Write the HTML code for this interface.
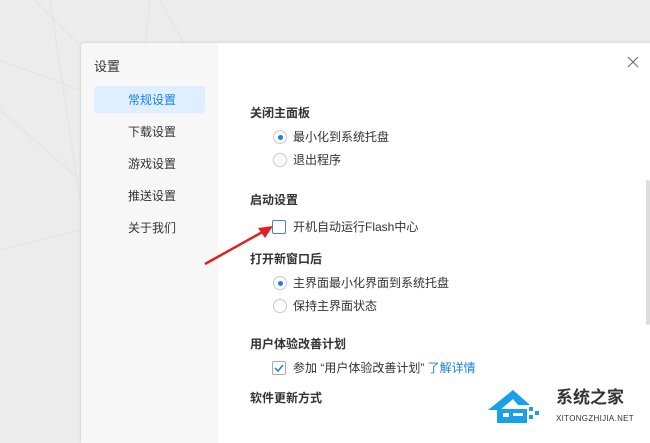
<!DOCTYPE html>
<html><head><meta charset="utf-8"><style>
*{margin:0;padding:0;box-sizing:border-box}
body{width:650px;height:436px;overflow:hidden;background:#ececec;font-family:"Liberation Sans","Noto Sans CJK SC",sans-serif;font-size:12px;color:#333;position:relative}
.dlg{position:absolute;left:81px;top:43px;width:575px;height:400px;background:#fff;border-radius:4px 0 0 0;box-shadow:0 0 3px rgba(0,0,0,.15)}
.side{position:absolute;left:0;top:0;width:137px;height:100%;background:#f7f7f7;border-radius:4px 0 0 0}
.t{position:absolute;white-space:nowrap;line-height:16px}
.act{position:absolute;left:13px;top:43px;width:111px;height:27px;background:#e0efff;border-radius:3px}
.radio{position:absolute;width:14px;height:14px;border:1px solid #c8c8c8;border-radius:50%;background:#fff}
.radio.on::after{content:"";position:absolute;left:3.5px;top:3.5px;width:5px;height:5px;border-radius:50%;background:#1a7fe8}
.cb{position:absolute;width:14px;height:14px;border:1px solid #8a8a8a;border-radius:2px;background:#fff}
</style></head><body>
<svg style="position:absolute;left:0;top:0" width="650" height="436"><g stroke="#e2e2e2" stroke-width="1" fill="none"><path d="M35 0L80 45M50 0L80 200M150 0L145 45M160 0L185 45M0 60L80 90M0 110L80 180M0 250L80 230"/></g></svg>
<div class="dlg">
<div class="side">
<div class="t" style="left:13px;top:16px;font-size:13px">设置</div>
<div class="act"></div>
<div class="t" style="left:47px;top:49px;color:#1a7fe8">常规设置</div>
<div class="t" style="left:47px;top:81px">下载设置</div>
<div class="t" style="left:47px;top:113px">游戏设置</div>
<div class="t" style="left:47px;top:145px">推送设置</div>
<div class="t" style="left:47px;top:177px">关于我们</div>
</div>
<svg style="position:absolute;left:546px;top:13px" width="12" height="12"><path d="M1 1L11 11M11 1L1 11" stroke="#666" stroke-width="1"/></svg>
<div style="position:absolute;left:565px;top:137px;width:4px;height:145px;background:#ddd;border-radius:2px"></div>
<div class="t" style="left:169px;top:62px;font-weight:bold">关闭主面板</div>
<div class="radio on" style="left:192px;top:87px"></div><div class="t" style="left:212px;top:86px">最小化到系统托盘</div>
<div class="radio" style="left:192px;top:110px"></div><div class="t" style="left:212px;top:109px">退出程序</div>
<div class="t" style="left:169px;top:149px;font-weight:bold">启动设置</div>
<div class="cb" style="left:191px;top:177px;border-color:#4a80c8"></div><div class="t" style="left:212px;top:176px">开机自动运行Flash中心</div>
<div class="t" style="left:169px;top:208px;font-weight:bold">打开新窗口后</div>
<div class="radio on" style="left:192px;top:233px"></div><div class="t" style="left:212px;top:232px">主界面最小化界面到系统托盘</div>
<div class="radio" style="left:192px;top:256px"></div><div class="t" style="left:212px;top:255px">保持主界面状态</div>
<div class="t" style="left:169px;top:293px;font-weight:bold">用户体验改善计划</div>
<div class="cb" style="left:191px;top:318px;border-color:#aaa"></div>
<svg style="position:absolute;left:193px;top:320px" width="10" height="10"><path d="M1 5L4 8L9 2" stroke="#1a7fe8" stroke-width="1.5" fill="none"/></svg>
<div class="t" style="left:212px;top:317px">参加 “用户体验改善计划” <span style="color:#1a7fe8">了解详情</span></div>
<div class="t" style="left:169px;top:347px;font-weight:bold">软件更新方式</div>
</div>
<svg style="position:absolute;left:200px;top:220px" width="80" height="50"><path d="M5 44L66 10" stroke="#e02020" stroke-width="2.5"/><path d="M73 6L58 8L65 18Z" fill="#e02020"/></svg>
<svg style="position:absolute;left:485px;top:385px" width="60" height="40"><path d="M3 25L28 5L45 20L33 20L28 14L15 25Z" fill="#1aa0e8"/><rect x="12" y="24" width="30" height="14" fill="#1aa0e8"/><rect x="18" y="28" width="6" height="4" fill="#fff"/><rect x="28" y="28" width="10" height="3" fill="#fff"/><rect x="44" y="22" width="4" height="4" fill="#1aa0e8"/><rect x="50" y="26" width="4" height="4" fill="#1aa0e8"/><rect x="44" y="30" width="4" height="4" fill="#1aa0e8"/></svg>
<div class="t" style="left:556px;top:390px;font-size:17px;font-weight:bold;color:#333">系统之家</div>
<div class="t" style="left:556px;top:411px;font-size:8px;color:#333;letter-spacing:.3px">XITONGZHIJIA.NET</div>
</body></html>
